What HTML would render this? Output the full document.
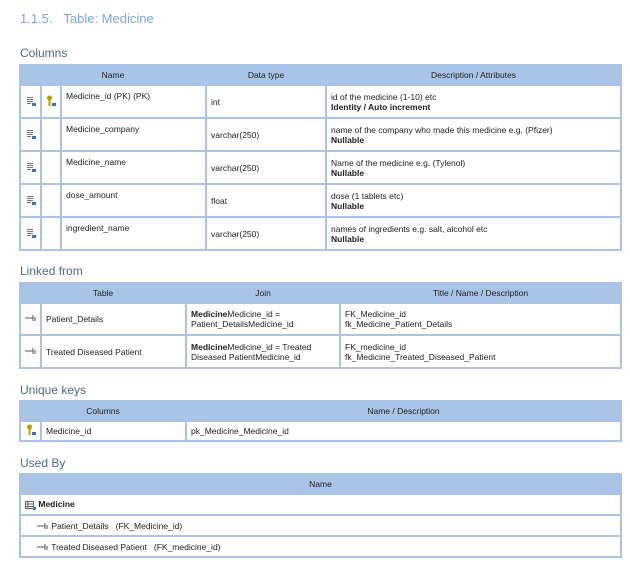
<!DOCTYPE html><html><head><style>
body{margin:0;background:#fff;font-family:"Liberation Sans",sans-serif;font-size:8.5px;color:#222;position:relative;width:630px;height:572px;overflow:hidden}
.h1{position:absolute;left:20px;top:11px;font-size:13px;color:#7ba6e0}
.h2{position:absolute;left:20px;font-size:12px;color:#50678c}
table{position:absolute;left:19px;width:603px;border-collapse:collapse;table-layout:fixed}
td,th{border:2px solid #a9c4e6;padding:0 4px;vertical-align:middle}
th{background:#a9c4e6;font-weight:normal;height:18px;text-align:center}
td{background:#fff}
.ic{padding:0;text-align:center}
.top{vertical-align:top;padding-top:5px}
b{font-weight:bold}
</style></head><body>
<div class="h1">1.1.5.&nbsp;&nbsp;&nbsp;Table: Medicine</div>
<div class="h2" style="top:46px">Columns</div>
<table style="top:64px">
<colgroup><col style="width:21px"><col style="width:20px"><col style="width:145px"><col style="width:120px"><col></colgroup>
<tr><th colspan="3">Name</th><th>Data type</th><th>Description / Attributes</th></tr>
<tr style="height:33px"><td class="ic"><svg width="10" height="10"><path d="M1 1.5h6M1 3.5h6M1 5.5h6M1 7.5h4" stroke="#777"/><rect x="6" y="7" width="4" height="3" fill="#3b6fc0"/></svg></td><td class="ic"><svg width="10" height="12"><circle cx="3.5" cy="3" r="2.5" fill="#b8a000"/><rect x="2.5" y="4" width="2" height="7" fill="#b8a000"/><rect x="6" y="8" width="4" height="3" fill="#3b6fc0"/></svg></td><td class="top">Medicine_id (PK) (PK)</td><td>int</td><td>id of the medicine (1-10) etc<br><b>Identity / Auto increment</b></td></tr>
<tr style="height:33px"><td class="ic"><svg width="10" height="10"><path d="M1 1.5h6M1 3.5h6M1 5.5h6M1 7.5h4" stroke="#777"/><rect x="6" y="7" width="4" height="3" fill="#3b6fc0"/></svg></td><td></td><td class="top">Medicine_company</td><td>varchar(250)</td><td>name of the company who made this medicine e.g. (Pfizer)<br><b>Nullable</b></td></tr>
<tr style="height:33px"><td class="ic"><svg width="10" height="10"><path d="M1 1.5h6M1 3.5h6M1 5.5h6M1 7.5h4" stroke="#777"/><rect x="6" y="7" width="4" height="3" fill="#3b6fc0"/></svg></td><td></td><td class="top">Medicine_name</td><td>varchar(250)</td><td>Name of the medicine e.g. (Tylenol)<br><b>Nullable</b></td></tr>
<tr style="height:33px"><td class="ic"><svg width="10" height="10"><path d="M1 1.5h6M1 3.5h6M1 5.5h6M1 7.5h4" stroke="#777"/><rect x="6" y="7" width="4" height="3" fill="#3b6fc0"/></svg></td><td></td><td class="top">dose_amount</td><td>float</td><td>dose (1 tablets etc)<br><b>Nullable</b></td></tr>
<tr style="height:33px"><td class="ic"><svg width="10" height="10"><path d="M1 1.5h6M1 3.5h6M1 5.5h6M1 7.5h4" stroke="#777"/><rect x="6" y="7" width="4" height="3" fill="#3b6fc0"/></svg></td><td></td><td class="top">ingredient_name</td><td>varchar(250)</td><td>names of ingredients e.g. salt, alcohol etc<br><b>Nullable</b></td></tr>
</table>
<div class="h2" style="top:264px">Linked from</div>
<table style="top:282px">
<colgroup><col style="width:21px"><col style="width:145px"><col style="width:154px"><col></colgroup>
<tr><th colspan="2">Table</th><th>Join</th><th>Title / Name / Description</th></tr>
<tr style="height:32px"><td class="ic"><svg width="12" height="8"><path d="M0 4h8M8 1v6M10 3v4" stroke="#555"/></svg></td><td>Patient_Details</td><td><b>Medicine</b>Medicine_id =<br>Patient_DetailsMedicine_id</td><td>FK_Medicine_id<br>fk_Medicine_Patient_Details</td></tr>
<tr style="height:33px"><td class="ic"><svg width="12" height="8"><path d="M0 4h8M8 1v6M10 3v4" stroke="#555"/></svg></td><td>Treated Diseased Patient</td><td><b>Medicine</b>Medicine_id = Treated<br>Diseased PatientMedicine_id</td><td>FK_medicine_id<br>fk_Medicine_Treated_Diseased_Patient</td></tr>
</table>
<div class="h2" style="top:383px">Unique keys</div>
<table style="top:400px">
<colgroup><col style="width:21px"><col style="width:145px"><col></colgroup>
<tr><th colspan="2">Columns</th><th>Name / Description</th></tr>
<tr style="height:20px"><td class="ic"><svg width="10" height="12"><circle cx="3.5" cy="3" r="2.5" fill="#b8a000"/><rect x="2.5" y="4" width="2" height="7" fill="#b8a000"/><rect x="6" y="8" width="4" height="3" fill="#3b6fc0"/></svg></td><td>Medicine_id</td><td>pk_Medicine_Medicine_id</td></tr>
</table>
<div class="h2" style="top:456px">Used By</div>
<table style="top:473px">
<tr><th>Name</th></tr>
<tr style="height:21px"><td><svg width="11" height="9" style="vertical-align:middle"><rect x="0.5" y="0.5" width="8" height="7" fill="none" stroke="#666"/><path d="M0 3h9M0 5.5h9M3 0v8" stroke="#666"/><rect x="8" y="6" width="3" height="3" fill="#3b6fc0"/></svg> <b>Medicine</b></td></tr>
<tr style="height:21px"><td style="padding-left:16px"><svg width="12" height="8" style="vertical-align:middle"><path d="M0 4h8M8 1v6M10 3v4" stroke="#555"/></svg> Patient_Details&nbsp;&nbsp;&nbsp;(FK_Medicine_id)</td></tr>
<tr style="height:21px"><td style="padding-left:16px"><svg width="12" height="8" style="vertical-align:middle"><path d="M0 4h8M8 1v6M10 3v4" stroke="#555"/></svg> Treated Diseased Patient&nbsp;&nbsp;&nbsp;(FK_medicine_id)</td></tr>
</table>
</body></html>
